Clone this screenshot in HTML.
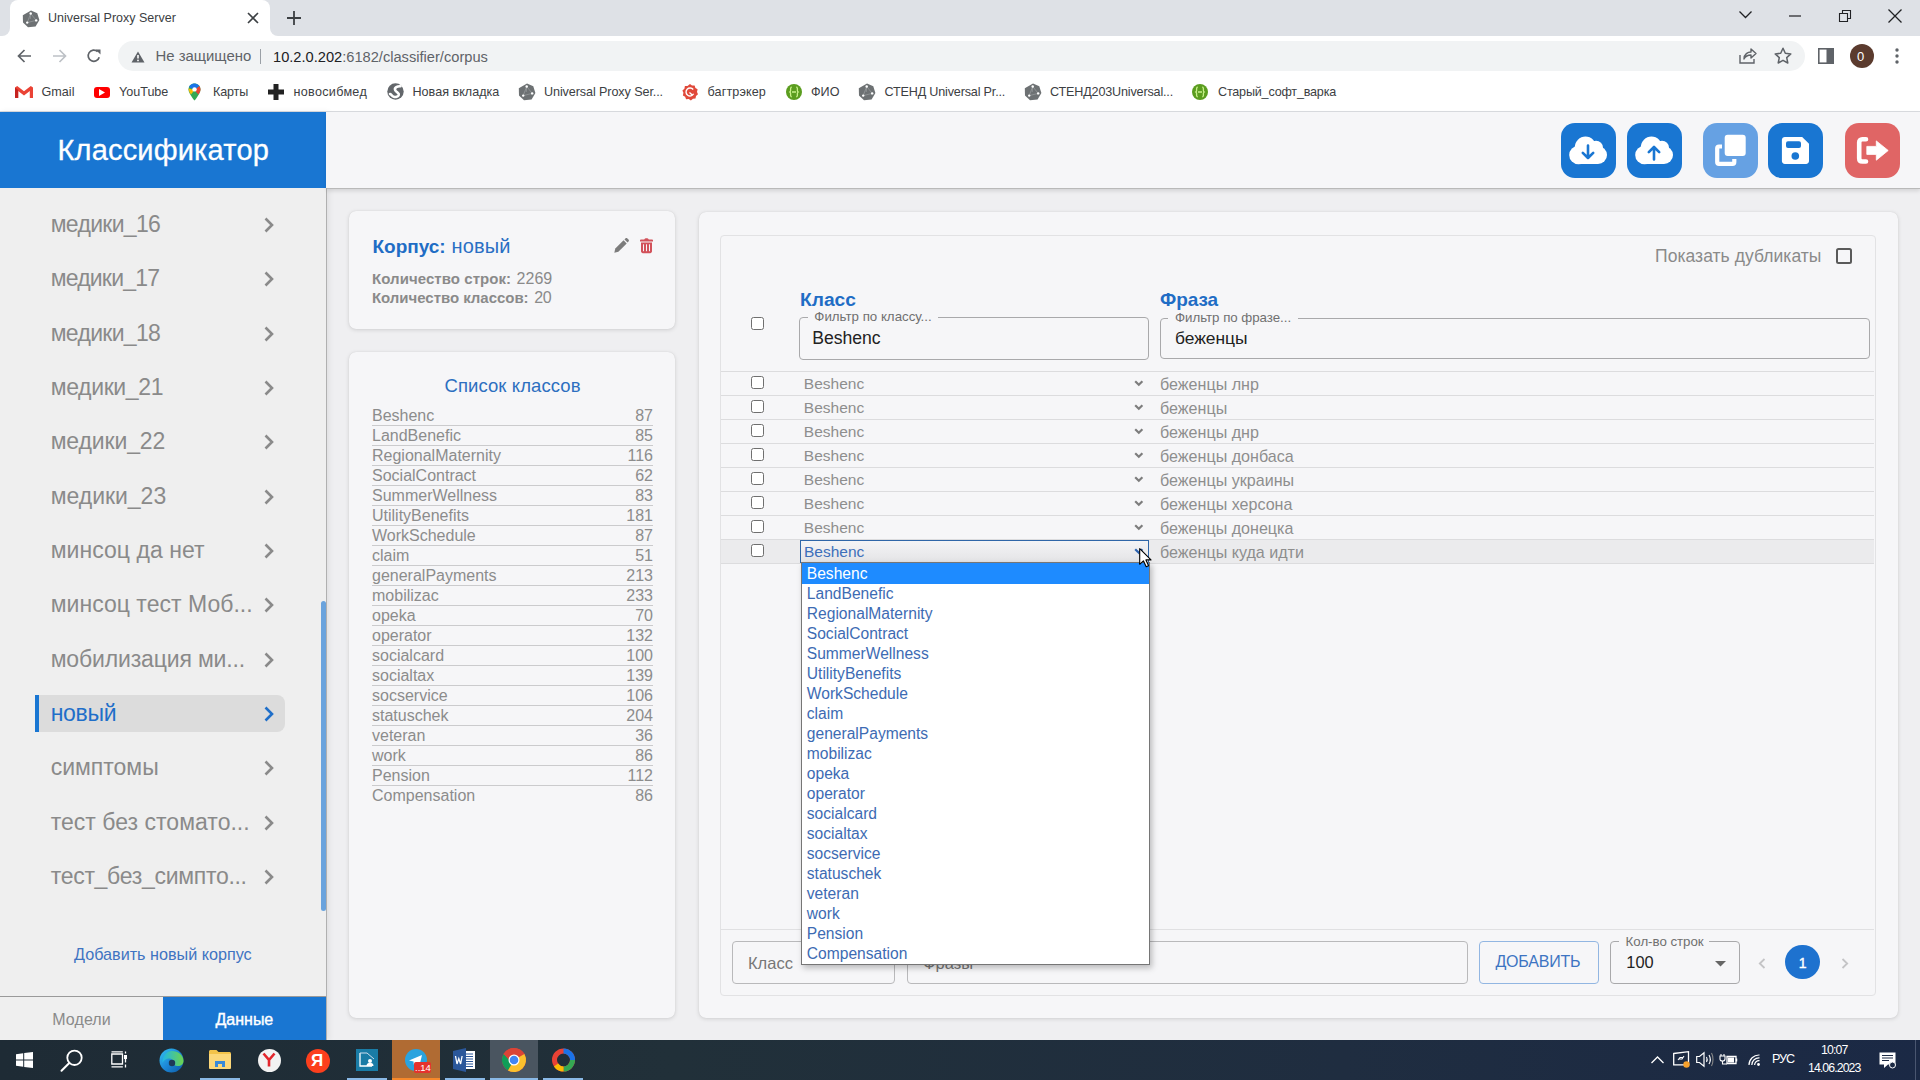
<!DOCTYPE html>
<html><head><meta charset="utf-8"><title>Universal Proxy Server</title>
<style>
*{box-sizing:border-box;margin:0;padding:0}
html,body{width:1920px;height:1080px;overflow:hidden;background:#efeff1;font-family:"Liberation Sans",sans-serif}
.a{position:absolute}
.t{position:absolute;white-space:nowrap;line-height:1}
svg{position:absolute;overflow:visible}
/* chrome */
#tabstrip{left:0;top:0;width:1920px;height:36px;background:#dee1e6}
#toolbar{left:0;top:36px;width:1920px;height:36px;background:#fff}
#bookmarks{left:0;top:72px;width:1920px;height:40px;background:#fff;border-bottom:1px solid #dadce0}
.bm{font-size:12.6px;color:#3c4043;top:85.5px}
/* page */
#sidebar{left:0;top:112px;width:327px;height:928px;background:#efefef;border-right:1px solid #b0b0b0;box-shadow:2px 0 6px rgba(0,0,0,.07)}
#brand{left:0;top:112px;width:326px;height:76px;background:#1976d2}
#topbar{left:327px;top:112px;width:1593px;height:77px;background:#f6f6f8;border-bottom:1px solid #b9b9b9;box-shadow:0 2px 4px rgba(0,0,0,.12)}
.card{position:absolute;background:#f6f6f8;border-radius:7px;box-shadow:0 1px 4px rgba(0,0,0,.13),0 0 1px rgba(0,0,0,.12)}
#taskbar{left:0;top:1040px;width:1920px;height:40px;background:#1f2a3a}
</style></head><body>

<!-- ===== Chrome tab strip ===== -->
<div id="tabstrip" class="a"></div>
<div class="a" style="left:10px;top:0;width:260px;height:36px;background:#fff;border-radius:8px 8px 0 0"></div>
<div class="a" style="left:2px;top:28px;width:8px;height:8px;background:#fff"></div>
<div class="a" style="left:-6px;top:20px;width:16px;height:16px;background:#dee1e6;border-radius:50%"></div>
<div class="a" style="left:270px;top:28px;width:8px;height:8px;background:#fff"></div>
<div class="a" style="left:270px;top:20px;width:16px;height:16px;background:#dee1e6;border-radius:50%"></div>
<svg style="left:22px;top:10px" width="18" height="18"><path d="M9 0.6L15.3 3.3L17.4 10L13.6 16.4L6 17.2L1 12.6L0.8 5.2Z" fill="#6d7173"/><path d="M8.7 3.5L5.2 12.6L14.2 10.4Z M8.7 3.5L8.2 9" stroke="#9a9d9f" stroke-width="0.7" fill="none"/><circle cx="8.7" cy="3.5" r="1.2" fill="#fff"/><circle cx="5.2" cy="12.6" r="1.2" fill="#fff"/><circle cx="14.2" cy="10.4" r="1.2" fill="#fff"/></svg>
<div class="t" style="left:48px;top:12.2px;font-size:12.5px;color:#3c4043">Universal Proxy Server</div>
<svg style="left:247px;top:12px" width="12" height="12"><path d="M1 1L11 11M11 1L1 11" stroke="#3c4043" stroke-width="1.6"/></svg>
<svg style="left:287px;top:11px" width="14" height="14"><path d="M7 0V14M0 7H14" stroke="#3c4043" stroke-width="1.8"/></svg>
<svg style="left:1739px;top:11px" width="13" height="8"><path d="M0.5 0.5L6.5 6.5L12.5 0.5" stroke="#202124" stroke-width="1.3" fill="none"/></svg>
<svg style="left:1789px;top:15px" width="12" height="2"><path d="M0 1H12" stroke="#202124" stroke-width="1.2"/></svg>
<svg style="left:1839px;top:10px" width="12" height="12"><path d="M0.5 3.5H8.5V11.5H0.5Z M3.5 3.5V0.5H11.5V8.5H8.5" stroke="#202124" stroke-width="1.1" fill="none"/></svg>
<svg style="left:1888px;top:9px" width="14" height="14"><path d="M0.5 0.5L13.5 13.5M13.5 0.5L0.5 13.5" stroke="#202124" stroke-width="1.3"/></svg>

<!-- ===== Toolbar ===== -->
<div id="toolbar" class="a"></div>
<svg style="left:17px;top:49px" width="15" height="14"><path d="M14 7H1.5M7.5 1L1.5 7L7.5 13" stroke="#5f6368" stroke-width="1.7" fill="none"/></svg>
<svg style="left:52px;top:49px" width="15" height="14"><path d="M1 7H13.5M7.5 1L13.5 7L7.5 13" stroke="#bdc1c6" stroke-width="1.7" fill="none"/></svg>
<svg style="left:86px;top:48px" width="16" height="16"><path d="M13.2 9.2A5.6 5.6 0 1 1 11.6 3.6" stroke="#5f6368" stroke-width="1.7" fill="none"/><path d="M9.5 1.5H14.5V6.5Z" fill="#5f6368"/></svg>
<div class="a" style="left:118px;top:41px;width:1687px;height:30px;background:#f1f3f4;border-radius:15px"></div>
<svg style="left:131px;top:51px" width="14" height="12"><path d="M7 0.5L13.5 11.5H0.5Z" fill="#5f6368"/><path d="M7 4V7.5" stroke="#fff" stroke-width="1.6"/><circle cx="7" cy="9.4" r="0.9" fill="#fff"/></svg>
<div class="t" style="left:155.5px;top:49.4px;font-size:14.9px;color:#5f6368">Не защищено</div>
<div class="a" style="left:260px;top:49px;width:1px;height:15px;background:#9aa0a6"></div>
<div class="t" style="left:273px;top:49.6px;font-size:14.65px;color:#5f6368"><span style="color:#202124">10.2.0.202</span>:6182/classifier/corpus</div>
<svg style="left:1739px;top:47px" width="18" height="18"><path d="M1 8V16H15V12" stroke="#5f6368" stroke-width="1.4" fill="none"/><path d="M5 12C5 7 9 5 12 5V2L17 6.5L12 11V8C9 8 6.5 9 5 12Z" stroke="#5f6368" stroke-width="1.4" fill="none" stroke-linejoin="round"/></svg>
<svg style="left:1774px;top:47px" width="18" height="18"><path d="M9 1.2L11.3 6.3L16.8 6.9L12.7 10.6L13.8 16L9 13.3L4.2 16L5.3 10.6L1.2 6.9L6.7 6.3Z" stroke="#5f6368" stroke-width="1.5" fill="none" stroke-linejoin="round"/></svg>
<svg style="left:1818px;top:48px" width="16" height="16"><rect x="0.8" y="0.8" width="14.4" height="14.4" stroke="#5f6368" stroke-width="1.6" fill="none"/><rect x="8.5" y="1" width="6.5" height="14" fill="#5f6368"/></svg>
<div class="a" style="left:1850px;top:44px;width:24px;height:24px;background:#5b3b2e;border-radius:50%"></div>
<div class="t" style="left:1857px;top:50px;font-size:13px;color:#fff">0</div>
<svg style="left:1895px;top:48px" width="4" height="16"><circle cx="2" cy="2" r="1.7" fill="#5f6368"/><circle cx="2" cy="8" r="1.7" fill="#5f6368"/><circle cx="2" cy="14" r="1.7" fill="#5f6368"/></svg>

<!-- ===== Bookmarks ===== -->
<div id="bookmarks" class="a"></div>
<svg style="left:15px;top:86px" width="18" height="12"><path d="M0 1.5V12H3.2V5L9 9.5L14.8 5V12H18V1.5L15.8 0L9 5.2L2.2 0Z" fill="#ea4335"/><path d="M0 1.5L3.2 4V12H1C0.4 12 0 11.6 0 11Z" fill="#c5221f"/></svg>
<div class="t bm" style="left:41.5px;letter-spacing:0.025px">Gmail</div>
<div class="a" style="left:93.5px;top:86.5px;width:16.5px;height:11.5px;background:#ff0000;border-radius:3px"></div>
<svg style="left:99px;top:89px" width="6" height="7"><path d="M0 0L6 3.5L0 7Z" fill="#fff"/></svg>
<div class="t bm" style="left:119px;letter-spacing:-0.024px">YouTube</div>
<svg style="left:188px;top:83px" width="13" height="18"><path d="M6.5 0.5C3.2 0.5 0.5 3.1 0.5 6.4C0.5 10.5 6.5 17.5 6.5 17.5C6.5 17.5 12.5 10.5 12.5 6.4C12.5 3.1 9.8 0.5 6.5 0.5Z" fill="#34a853"/><path d="M1 4C1.8 1.8 4 0.5 6.5 0.5C8.5 0.5 10.3 1.4 11.4 2.9L6.5 7Z" fill="#1a73e8"/><path d="M0.6 5.5L6.5 7L3 11.5C1.5 9.5 0.5 7.5 0.6 5.5Z" fill="#fbbc04"/><path d="M11.4 2.9C12.1 3.9 12.5 5.1 12.5 6.4C12.5 7.8 11.5 9.8 10.3 11.5L6.5 7Z" fill="#ea4335"/><circle cx="6.5" cy="6.4" r="2.2" fill="#fff"/></svg>
<div class="t bm" style="left:213px;letter-spacing:-0.175px">Карты</div>
<svg style="left:268px;top:83px" width="16" height="18"><path d="M8 1V17M0 9H16" stroke="#222" stroke-width="5"/></svg>
<div class="t bm" style="left:293.5px;letter-spacing:0.302px">новосибмед</div>
<svg style="left:387px;top:83px" width="17" height="17"><circle cx="8.5" cy="8.5" r="8.2" fill="#63676b"/><path d="M13.5 3.2C10.5 3 7 4.5 8.2 7.2C9.3 9.6 12.5 9.5 11.8 12C11.3 13.8 8.5 14.5 6.5 13.6C5 13 4.5 11.5 3 11" stroke="#fff" stroke-width="2.6" fill="none" stroke-linecap="round"/></svg>
<div class="t bm" style="left:412.5px;letter-spacing:0.001px">Новая вкладка</div>
<svg style="left:518px;top:83px" width="18" height="18"><path d="M9 0.6L15.3 3.3L17.4 10L13.6 16.4L6 17.2L1 12.6L0.8 5.2Z" fill="#6d7173"/><path d="M8.7 3.5L5.2 12.6L14.2 10.4Z M8.7 3.5L8.2 9" stroke="#9a9d9f" stroke-width="0.7" fill="none"/><circle cx="8.7" cy="3.5" r="1.2" fill="#fff"/><circle cx="5.2" cy="12.6" r="1.2" fill="#fff"/><circle cx="14.2" cy="10.4" r="1.2" fill="#fff"/></svg>
<div class="t bm" style="left:544px;letter-spacing:-0.094px">Universal Proxy Ser...</div>
<svg style="left:682px;top:83.5px" width="16" height="16"><path d="M8 0L10 1.6L12.6 1.4L13.4 3.9L15.6 5.3L15 7.9L16 10.3L14 12L13.5 14.6L10.9 14.8L8.9 16.4L6.7 15L4.1 15.2L3.1 12.8L0.9 11.4L1.4 8.8L0.4 6.4L2.4 4.7L2.9 2.1L5.5 1.9Z" fill="#e0493a"/><path d="M11.2 5.5A4 4 0 1 0 11.6 9.8" stroke="#fff" stroke-width="1.4" fill="none"/><path d="M7.5 8.5L10.5 11.2" stroke="#fff" stroke-width="1.4"/></svg>
<div class="t bm" style="left:707.5px;letter-spacing:0.125px">багтрэкер</div>
<svg style="left:786px;top:83.5px" width="16" height="16"><circle cx="8" cy="8" r="8" fill="#5b9d1f"/><path d="M5.8 3.2C4.3 3.2 4.6 5.2 4.6 6.5C4.6 7.5 3.8 8 3.8 8C3.8 8 4.6 8.5 4.6 9.5C4.6 10.8 4.3 12.8 5.8 12.8M10.2 3.2C11.7 3.2 11.4 5.2 11.4 6.5C11.4 7.5 12.2 8 12.2 8C12.2 8 11.4 8.5 11.4 9.5C11.4 10.8 11.7 12.8 10.2 12.8M6 8H10" stroke="#c8f08a" stroke-width="1.3" fill="none"/></svg>
<div class="t bm" style="left:811px;letter-spacing:0.026px">ФИО</div>
<svg style="left:858px;top:83px" width="18" height="18"><path d="M9 0.6L15.3 3.3L17.4 10L13.6 16.4L6 17.2L1 12.6L0.8 5.2Z" fill="#6d7173"/><path d="M8.7 3.5L5.2 12.6L14.2 10.4Z M8.7 3.5L8.2 9" stroke="#9a9d9f" stroke-width="0.7" fill="none"/><circle cx="8.7" cy="3.5" r="1.2" fill="#fff"/><circle cx="5.2" cy="12.6" r="1.2" fill="#fff"/><circle cx="14.2" cy="10.4" r="1.2" fill="#fff"/></svg>
<div class="t bm" style="left:884.5px;letter-spacing:-0.175px">СТЕНД Universal Pr...</div>
<svg style="left:1024px;top:83px" width="18" height="18"><path d="M9 0.6L15.3 3.3L17.4 10L13.6 16.4L6 17.2L1 12.6L0.8 5.2Z" fill="#6d7173"/><path d="M8.7 3.5L5.2 12.6L14.2 10.4Z M8.7 3.5L8.2 9" stroke="#9a9d9f" stroke-width="0.7" fill="none"/><circle cx="8.7" cy="3.5" r="1.2" fill="#fff"/><circle cx="5.2" cy="12.6" r="1.2" fill="#fff"/><circle cx="14.2" cy="10.4" r="1.2" fill="#fff"/></svg>
<div class="t bm" style="left:1050px;letter-spacing:-0.168px">СТЕНД203Universal...</div>
<svg style="left:1192px;top:83.5px" width="16" height="16"><circle cx="8" cy="8" r="8" fill="#5b9d1f"/><path d="M5.8 3.2C4.3 3.2 4.6 5.2 4.6 6.5C4.6 7.5 3.8 8 3.8 8C3.8 8 4.6 8.5 4.6 9.5C4.6 10.8 4.3 12.8 5.8 12.8M10.2 3.2C11.7 3.2 11.4 5.2 11.4 6.5C11.4 7.5 12.2 8 12.2 8C12.2 8 11.4 8.5 11.4 9.5C11.4 10.8 11.7 12.8 10.2 12.8M6 8H10" stroke="#c8f08a" stroke-width="1.3" fill="none"/></svg>
<div class="t bm" style="left:1218px;letter-spacing:-0.201px">Старый_софт_варка</div>


<!-- ===== Page ===== -->
<div id="sidebar" class="a"></div>
<div id="brand" class="a"></div>
<div class="t" style="left:57.5px;top:135.5px;font-size:29px;color:#fff;letter-spacing:0.175px;-webkit-text-stroke:0.3px #fff">Классификатор</div>
<div id="topbar" class="a"></div>
<div class="a" style="left:326px;top:112px;width:1px;height:76px;background:#f6f6f8"></div>
<div class="a" style="left:35px;top:695px;width:250px;height:37px;background:#dcdcdc;border-radius:0 8px 8px 0"></div>
<div class="a" style="left:35px;top:695px;width:4px;height:37px;background:#1976d2"></div>
<div class="t" style="left:50.7px;top:212.93px;font-size:23.00px;color:#8a8a8a;letter-spacing:-0.686px">медики_16</div>
<svg style="left:264px;top:216.9px" width="10" height="16"><path d="M1.5 1.5L8 8L1.5 14.5" stroke="#8a8a8a" stroke-width="2.6" fill="none"/></svg>
<div class="t" style="left:50.7px;top:267.26px;font-size:23.00px;color:#8a8a8a;letter-spacing:-0.797px">медики_17</div>
<svg style="left:264px;top:271.2px" width="10" height="16"><path d="M1.5 1.5L8 8L1.5 14.5" stroke="#8a8a8a" stroke-width="2.6" fill="none"/></svg>
<div class="t" style="left:50.7px;top:321.59px;font-size:23.00px;color:#8a8a8a;letter-spacing:-0.686px">медики_18</div>
<svg style="left:264px;top:325.6px" width="10" height="16"><path d="M1.5 1.5L8 8L1.5 14.5" stroke="#8a8a8a" stroke-width="2.6" fill="none"/></svg>
<div class="t" style="left:50.7px;top:375.92px;font-size:23.00px;color:#8a8a8a;letter-spacing:-0.352px">медики_21</div>
<svg style="left:264px;top:379.9px" width="10" height="16"><path d="M1.5 1.5L8 8L1.5 14.5" stroke="#8a8a8a" stroke-width="2.6" fill="none"/></svg>
<div class="t" style="left:50.7px;top:430.25px;font-size:23.00px;color:#8a8a8a;letter-spacing:-0.130px">медики_22</div>
<svg style="left:264px;top:434.2px" width="10" height="16"><path d="M1.5 1.5L8 8L1.5 14.5" stroke="#8a8a8a" stroke-width="2.6" fill="none"/></svg>
<div class="t" style="left:50.7px;top:484.58px;font-size:23.00px;color:#8a8a8a;letter-spacing:-0.019px">медики_23</div>
<svg style="left:264px;top:488.5px" width="10" height="16"><path d="M1.5 1.5L8 8L1.5 14.5" stroke="#8a8a8a" stroke-width="2.6" fill="none"/></svg>
<div class="t" style="left:50.7px;top:538.91px;font-size:23.00px;color:#8a8a8a;letter-spacing:0.049px">минсоц да нет</div>
<svg style="left:264px;top:542.9px" width="10" height="16"><path d="M1.5 1.5L8 8L1.5 14.5" stroke="#8a8a8a" stroke-width="2.6" fill="none"/></svg>
<div class="t" style="left:50.7px;top:593.24px;font-size:23.00px;color:#8a8a8a;letter-spacing:0.026px">минсоц тест Моб...</div>
<svg style="left:264px;top:597.2px" width="10" height="16"><path d="M1.5 1.5L8 8L1.5 14.5" stroke="#8a8a8a" stroke-width="2.6" fill="none"/></svg>
<div class="t" style="left:50.7px;top:647.57px;font-size:23.00px;color:#8a8a8a;letter-spacing:-0.154px">мобилизация ми...</div>
<svg style="left:264px;top:651.5px" width="10" height="16"><path d="M1.5 1.5L8 8L1.5 14.5" stroke="#8a8a8a" stroke-width="2.6" fill="none"/></svg>
<div class="t" style="left:50.7px;top:701.90px;font-size:23.00px;color:#1f6fc9;letter-spacing:-0.319px">новый</div>
<svg style="left:264px;top:705.9px" width="10" height="16"><path d="M1.5 1.5L8 8L1.5 14.5" stroke="#1f6fc9" stroke-width="2.6" fill="none"/></svg>
<div class="t" style="left:50.7px;top:756.23px;font-size:23.00px;color:#8a8a8a;letter-spacing:-0.002px">симптомы</div>
<svg style="left:264px;top:760.2px" width="10" height="16"><path d="M1.5 1.5L8 8L1.5 14.5" stroke="#8a8a8a" stroke-width="2.6" fill="none"/></svg>
<div class="t" style="left:50.7px;top:810.56px;font-size:23.00px;color:#8a8a8a;letter-spacing:0.025px">тест без стомато...</div>
<svg style="left:264px;top:814.5px" width="10" height="16"><path d="M1.5 1.5L8 8L1.5 14.5" stroke="#8a8a8a" stroke-width="2.6" fill="none"/></svg>
<div class="t" style="left:50.7px;top:864.89px;font-size:23.00px;color:#8a8a8a;letter-spacing:-0.293px">тест_без_симпто...</div>
<svg style="left:264px;top:868.9px" width="10" height="16"><path d="M1.5 1.5L8 8L1.5 14.5" stroke="#8a8a8a" stroke-width="2.6" fill="none"/></svg>
<div class="a" style="left:321px;top:601px;width:5px;height:310px;background:#6aa3dd;border-radius:3px"></div>
<div class="t" style="left:74.0px;top:946.29px;font-size:16.20px;color:#3f74c2;letter-spacing:-0.004px">Добавить новый корпус</div>
<div class="a" style="left:0;top:996px;width:326px;height:1px;background:#9a9a9a"></div>
<div class="a" style="left:163px;top:997px;width:163px;height:43px;background:#1976d2"></div>
<div class="t" style="left:52.3px;top:1012.06px;font-size:16.00px;color:#8a8a8a;letter-spacing:0.070px">Модели</div>
<div class="t" style="left:215.5px;top:1012.06px;font-size:16.00px;color:#fff;letter-spacing:-0.007px;-webkit-text-stroke:0.4px #fff">Данные</div>
<div class="card" style="left:349px;top:211px;width:326px;height:118px"></div>
<div class="t" style="left:372.5px;top:236.92px;font-size:19.00px;color:#1f6dc5;font-weight:bold;letter-spacing:-0.038px">Корпус:</div>
<div class="t" style="left:451.6px;top:236.07px;font-size:20.00px;color:#2a6fc4;letter-spacing:0.131px">новый</div>
<svg style="left:614px;top:238px" width="16" height="15"><path d="M0.3 14.7L1.3 10.6L9.6 2.3L12.7 5.4L4.4 13.7Z" fill="#7c7c7c"/><path d="M10.5 1.4L11.4 0.5C12 -0.1 12.8 -0.1 13.4 0.5L14.5 1.6C15.1 2.2 15.1 3 14.5 3.6L13.6 4.5Z" fill="#7c7c7c"/></svg>
<svg style="left:640px;top:237.5px" width="13" height="16"><path d="M0 2.2C0 1.7 0.4 1.5 0.9 1.5H4.2C4.6 0.6 5.4 0.3 6.5 0.3C7.6 0.3 8.4 0.6 8.8 1.5H12.1C12.6 1.5 13 1.7 13 2.2V3.4H0Z" fill="#d2525b"/><path d="M1 4.4H12V13.3C12 14.4 11.2 15.2 10.1 15.2H2.9C1.8 15.2 1 14.4 1 13.3Z" fill="#d2525b"/><path d="M3.5 6.3V13.2M6.5 6.3V13.2M9.5 6.3V13.2" stroke="#f6f6f8" stroke-width="1"/></svg>
<div class="t" style="left:372.0px;top:270.80px;font-size:15.00px;color:#8a8a8a;font-weight:bold;letter-spacing:0.061px">Количество строк:</div>
<div class="t" style="left:516.4px;top:270.96px;font-size:16.00px;color:#8a8a8a;letter-spacing:0.094px">2269</div>
<div class="t" style="left:372.0px;top:289.80px;font-size:15.00px;color:#8a8a8a;font-weight:bold;letter-spacing:-0.036px">Количество классов:</div>
<div class="t" style="left:534.2px;top:289.96px;font-size:16.00px;color:#8a8a8a;letter-spacing:-0.406px">20</div>
<div class="card" style="left:349px;top:352px;width:326px;height:666px"></div>
<div class="t" style="left:444.5px;top:376.54px;font-size:18.50px;color:#2d6fc0;letter-spacing:0.081px">Список классов</div>
<div class="t" style="left:372.0px;top:407.66px;font-size:16.00px;color:#8c8c8c">Beshenc</div>
<div class="t" style="right:1267px;top:407.66px;font-size:16px;color:#8c8c8c">87</div>
<div class="a" style="left:372px;top:425.0px;width:280.5px;height:1px;background:#cbcbcd"></div>
<div class="t" style="left:372.0px;top:427.66px;font-size:16.00px;color:#8c8c8c">LandBenefic</div>
<div class="t" style="right:1267px;top:427.66px;font-size:16px;color:#8c8c8c">85</div>
<div class="a" style="left:372px;top:445.0px;width:280.5px;height:1px;background:#cbcbcd"></div>
<div class="t" style="left:372.0px;top:447.66px;font-size:16.00px;color:#8c8c8c">RegionalMaternity</div>
<div class="t" style="right:1267px;top:447.66px;font-size:16px;color:#8c8c8c">116</div>
<div class="a" style="left:372px;top:465.0px;width:280.5px;height:1px;background:#cbcbcd"></div>
<div class="t" style="left:372.0px;top:467.66px;font-size:16.00px;color:#8c8c8c">SocialContract</div>
<div class="t" style="right:1267px;top:467.66px;font-size:16px;color:#8c8c8c">62</div>
<div class="a" style="left:372px;top:485.0px;width:280.5px;height:1px;background:#cbcbcd"></div>
<div class="t" style="left:372.0px;top:487.66px;font-size:16.00px;color:#8c8c8c">SummerWellness</div>
<div class="t" style="right:1267px;top:487.66px;font-size:16px;color:#8c8c8c">83</div>
<div class="a" style="left:372px;top:505.0px;width:280.5px;height:1px;background:#cbcbcd"></div>
<div class="t" style="left:372.0px;top:507.66px;font-size:16.00px;color:#8c8c8c">UtilityBenefits</div>
<div class="t" style="right:1267px;top:507.66px;font-size:16px;color:#8c8c8c">181</div>
<div class="a" style="left:372px;top:525.0px;width:280.5px;height:1px;background:#cbcbcd"></div>
<div class="t" style="left:372.0px;top:527.66px;font-size:16.00px;color:#8c8c8c">WorkSchedule</div>
<div class="t" style="right:1267px;top:527.66px;font-size:16px;color:#8c8c8c">87</div>
<div class="a" style="left:372px;top:545.0px;width:280.5px;height:1px;background:#cbcbcd"></div>
<div class="t" style="left:372.0px;top:547.66px;font-size:16.00px;color:#8c8c8c">claim</div>
<div class="t" style="right:1267px;top:547.66px;font-size:16px;color:#8c8c8c">51</div>
<div class="a" style="left:372px;top:565.0px;width:280.5px;height:1px;background:#cbcbcd"></div>
<div class="t" style="left:372.0px;top:567.66px;font-size:16.00px;color:#8c8c8c">generalPayments</div>
<div class="t" style="right:1267px;top:567.66px;font-size:16px;color:#8c8c8c">213</div>
<div class="a" style="left:372px;top:585.0px;width:280.5px;height:1px;background:#cbcbcd"></div>
<div class="t" style="left:372.0px;top:587.66px;font-size:16.00px;color:#8c8c8c">mobilizac</div>
<div class="t" style="right:1267px;top:587.66px;font-size:16px;color:#8c8c8c">233</div>
<div class="a" style="left:372px;top:605.0px;width:280.5px;height:1px;background:#cbcbcd"></div>
<div class="t" style="left:372.0px;top:607.66px;font-size:16.00px;color:#8c8c8c">opeka</div>
<div class="t" style="right:1267px;top:607.66px;font-size:16px;color:#8c8c8c">70</div>
<div class="a" style="left:372px;top:625.0px;width:280.5px;height:1px;background:#cbcbcd"></div>
<div class="t" style="left:372.0px;top:627.66px;font-size:16.00px;color:#8c8c8c">operator</div>
<div class="t" style="right:1267px;top:627.66px;font-size:16px;color:#8c8c8c">132</div>
<div class="a" style="left:372px;top:645.0px;width:280.5px;height:1px;background:#cbcbcd"></div>
<div class="t" style="left:372.0px;top:647.66px;font-size:16.00px;color:#8c8c8c">socialcard</div>
<div class="t" style="right:1267px;top:647.66px;font-size:16px;color:#8c8c8c">100</div>
<div class="a" style="left:372px;top:665.0px;width:280.5px;height:1px;background:#cbcbcd"></div>
<div class="t" style="left:372.0px;top:667.66px;font-size:16.00px;color:#8c8c8c">socialtax</div>
<div class="t" style="right:1267px;top:667.66px;font-size:16px;color:#8c8c8c">139</div>
<div class="a" style="left:372px;top:685.0px;width:280.5px;height:1px;background:#cbcbcd"></div>
<div class="t" style="left:372.0px;top:687.66px;font-size:16.00px;color:#8c8c8c">socservice</div>
<div class="t" style="right:1267px;top:687.66px;font-size:16px;color:#8c8c8c">106</div>
<div class="a" style="left:372px;top:705.0px;width:280.5px;height:1px;background:#cbcbcd"></div>
<div class="t" style="left:372.0px;top:707.66px;font-size:16.00px;color:#8c8c8c">statuschek</div>
<div class="t" style="right:1267px;top:707.66px;font-size:16px;color:#8c8c8c">204</div>
<div class="a" style="left:372px;top:725.0px;width:280.5px;height:1px;background:#cbcbcd"></div>
<div class="t" style="left:372.0px;top:727.66px;font-size:16.00px;color:#8c8c8c">veteran</div>
<div class="t" style="right:1267px;top:727.66px;font-size:16px;color:#8c8c8c">36</div>
<div class="a" style="left:372px;top:745.0px;width:280.5px;height:1px;background:#cbcbcd"></div>
<div class="t" style="left:372.0px;top:747.66px;font-size:16.00px;color:#8c8c8c">work</div>
<div class="t" style="right:1267px;top:747.66px;font-size:16px;color:#8c8c8c">86</div>
<div class="a" style="left:372px;top:765.0px;width:280.5px;height:1px;background:#cbcbcd"></div>
<div class="t" style="left:372.0px;top:767.66px;font-size:16.00px;color:#8c8c8c">Pension</div>
<div class="t" style="right:1267px;top:767.66px;font-size:16px;color:#8c8c8c">112</div>
<div class="a" style="left:372px;top:785.0px;width:280.5px;height:1px;background:#cbcbcd"></div>
<div class="t" style="left:372.0px;top:787.66px;font-size:16.00px;color:#8c8c8c">Compensation</div>
<div class="t" style="right:1267px;top:787.66px;font-size:16px;color:#8c8c8c">86</div>
<div class="a" style="left:1561px;top:123px;width:55px;height:55px;border-radius:14px;background:#1976d2"></div><svg style="left:1561px;top:123px" width="55" height="55"><circle cx="17.5" cy="32" r="9.3" fill="#fff"/><circle cx="24.5" cy="24.3" r="10.7" fill="#fff"/><circle cx="35" cy="24.8" r="7" fill="#fff"/><circle cx="37" cy="32" r="9" fill="#fff"/><rect x="17.5" y="28" width="19.5" height="13" fill="#fff"/><path d="M27 22.5V35M21.8 29.8L27 35L32.2 29.8" stroke="#1976d2" stroke-width="2.6" fill="none" stroke-linecap="round" stroke-linejoin="round"/></svg>
<div class="a" style="left:1627px;top:123px;width:55px;height:55px;border-radius:14px;background:#1976d2"></div><svg style="left:1627px;top:123px" width="55" height="55"><circle cx="17.5" cy="32" r="9.3" fill="#fff"/><circle cx="24.5" cy="24.3" r="10.7" fill="#fff"/><circle cx="35" cy="24.8" r="7" fill="#fff"/><circle cx="37" cy="32" r="9" fill="#fff"/><rect x="17.5" y="28" width="19.5" height="13" fill="#fff"/><path d="M27 36.5V24M21.8 29.2L27 24L32.2 29.2" stroke="#1976d2" stroke-width="2.6" fill="none" stroke-linecap="round" stroke-linejoin="round"/></svg>
<div class="a" style="left:1703px;top:123px;width:55px;height:55px;border-radius:14px;background:#66a1e3"></div><svg style="left:1703px;top:123px" width="55" height="55"><rect x="21.7" y="11.8" width="21" height="21.2" rx="3" fill="#fff"/><path d="M19 23.5H16C15 23.5 14.2 24.3 14.2 25.3V39C14.2 40 15 40.8 16 40.8H29.5C30.5 40.8 31.3 40 31.3 39V36" stroke="#fff" stroke-width="4.2" fill="none"/></svg>
<div class="a" style="left:1768px;top:123px;width:55px;height:55px;border-radius:14px;background:#1976d2"></div><svg style="left:1768px;top:123px" width="55" height="55"><path d="M16.8 13.9H34.2L41 20.7V38C41 39.6 39.7 40.9 38.1 40.9H16.8C15.2 40.9 13.9 39.6 13.9 38V16.8C13.9 15.2 15.2 13.9 16.8 13.9Z" fill="#fff"/><rect x="18" y="18.2" width="15" height="6.7" rx="2" fill="#1976d2"/><circle cx="27.3" cy="33" r="3.8" fill="#1976d2"/></svg>
<div class="a" style="left:1845px;top:123px;width:55px;height:55px;border-radius:14px;background:#e06565"></div><svg style="left:1845px;top:123px" width="55" height="55"><path d="M21 16.3H17.3C15.4 16.3 14.2 17.6 14.2 19.5V35.3C14.2 37.2 15.4 38.5 17.3 38.5H21" stroke="#fff" stroke-width="4.6" fill="none" stroke-linecap="round"/><path d="M21.8 23.4H31.3V17.9L43.2 27.5L31.3 37.2V31.4H21.8Z" fill="#fff" stroke="#fff" stroke-width="0.8" stroke-linejoin="round"/></svg>
<div class="card" style="left:699px;top:212px;width:1199px;height:806px"></div>
<div class="a" style="left:720px;top:235px;width:1156px;height:761px;border:1px solid #e2e2e4;border-radius:4px"></div>
<div class="t" style="left:1655.0px;top:248.49px;font-size:17.50px;color:#8a8a8a;letter-spacing:0.047px">Показать дубликаты</div>
<div class="a" style="left:1836.0px;top:248.0px;width:16px;height:16px;border:2.0px solid #5a5a5a;border-radius:2.5px;background:transparent"></div>
<div class="a" style="left:751.0px;top:317.0px;width:13px;height:13px;border:1.5px solid #6f6f6f;border-radius:2.5px;background:#fff"></div>
<div class="t" style="left:800.0px;top:289.75px;font-size:19.20px;color:#1f6dc5;font-weight:bold;letter-spacing:0.016px">Класс</div>
<div class="t" style="left:1160.0px;top:289.92px;font-size:19.00px;color:#1f6dc5;font-weight:bold;letter-spacing:-0.075px">Фраза</div>
<div class="a" style="left:799.0px;top:317.0px;width:350.0px;height:42.5px;border:1px solid #a9a9ab;border-radius:4px"></div><div class="a" style="left:808.0px;top:316.0px;width:130.0px;height:3px;background:#f6f6f8"></div><div class="t" style="left:814.3px;top:310.34px;font-size:13.30px;color:#707070;letter-spacing:-0.004px">Фильтр по классу...</div>
<div class="t" style="left:812.2px;top:330.30px;font-size:17.60px;color:#222">Beshenc</div>
<div class="a" style="left:1160.0px;top:317.5px;width:710.0px;height:41.7px;border:1px solid #a9a9ab;border-radius:4px"></div><div class="a" style="left:1168.0px;top:316.5px;width:130.4px;height:3px;background:#f6f6f8"></div><div class="t" style="left:1175.0px;top:310.84px;font-size:13.30px;color:#707070;letter-spacing:-0.033px">Фильтр по фразе...</div>
<div class="t" style="left:1175.0px;top:329.77px;font-size:17.40px;color:#222;letter-spacing:-0.018px">беженцы</div>
<div class="a" style="left:721px;top:371px;width:1153px;height:1px;background:#dcdcde"></div>
<div class="a" style="left:721px;top:395px;width:1153px;height:1px;background:#dcdcde"></div>
<div class="a" style="left:751.0px;top:375.5px;width:13px;height:13px;border:1.5px solid #6f6f6f;border-radius:2.5px;background:#fff"></div>
<div class="t" style="left:803.8px;top:375.88px;font-size:15.50px;color:#8e8e8e;letter-spacing:0.008px">Beshenc</div>
<svg style="left:1134px;top:380.0px" width="10" height="7"><path d="M1.2 1.2L4.8 4.8L8.4 1.2" stroke="#7d7d7d" stroke-width="2.2" fill="none"/></svg>
<div class="t" style="left:1160.0px;top:376.37px;font-size:16.10px;color:#8e8e8e">беженцы лнр</div>
<div class="a" style="left:721px;top:419px;width:1153px;height:1px;background:#dcdcde"></div>
<div class="a" style="left:751.0px;top:399.5px;width:13px;height:13px;border:1.5px solid #6f6f6f;border-radius:2.5px;background:#fff"></div>
<div class="t" style="left:803.8px;top:399.88px;font-size:15.50px;color:#8e8e8e;letter-spacing:0.008px">Beshenc</div>
<svg style="left:1134px;top:404.0px" width="10" height="7"><path d="M1.2 1.2L4.8 4.8L8.4 1.2" stroke="#7d7d7d" stroke-width="2.2" fill="none"/></svg>
<div class="t" style="left:1160.0px;top:400.37px;font-size:16.10px;color:#8e8e8e">беженцы</div>
<div class="a" style="left:721px;top:443px;width:1153px;height:1px;background:#dcdcde"></div>
<div class="a" style="left:751.0px;top:423.5px;width:13px;height:13px;border:1.5px solid #6f6f6f;border-radius:2.5px;background:#fff"></div>
<div class="t" style="left:803.8px;top:423.88px;font-size:15.50px;color:#8e8e8e;letter-spacing:0.008px">Beshenc</div>
<svg style="left:1134px;top:428.0px" width="10" height="7"><path d="M1.2 1.2L4.8 4.8L8.4 1.2" stroke="#7d7d7d" stroke-width="2.2" fill="none"/></svg>
<div class="t" style="left:1160.0px;top:424.37px;font-size:16.10px;color:#8e8e8e">беженцы днр</div>
<div class="a" style="left:721px;top:467px;width:1153px;height:1px;background:#dcdcde"></div>
<div class="a" style="left:751.0px;top:447.5px;width:13px;height:13px;border:1.5px solid #6f6f6f;border-radius:2.5px;background:#fff"></div>
<div class="t" style="left:803.8px;top:447.88px;font-size:15.50px;color:#8e8e8e;letter-spacing:0.008px">Beshenc</div>
<svg style="left:1134px;top:452.0px" width="10" height="7"><path d="M1.2 1.2L4.8 4.8L8.4 1.2" stroke="#7d7d7d" stroke-width="2.2" fill="none"/></svg>
<div class="t" style="left:1160.0px;top:448.37px;font-size:16.10px;color:#8e8e8e">беженцы донбаса</div>
<div class="a" style="left:721px;top:491px;width:1153px;height:1px;background:#dcdcde"></div>
<div class="a" style="left:751.0px;top:471.5px;width:13px;height:13px;border:1.5px solid #6f6f6f;border-radius:2.5px;background:#fff"></div>
<div class="t" style="left:803.8px;top:471.88px;font-size:15.50px;color:#8e8e8e;letter-spacing:0.008px">Beshenc</div>
<svg style="left:1134px;top:476.0px" width="10" height="7"><path d="M1.2 1.2L4.8 4.8L8.4 1.2" stroke="#7d7d7d" stroke-width="2.2" fill="none"/></svg>
<div class="t" style="left:1160.0px;top:472.37px;font-size:16.10px;color:#8e8e8e">беженцы украины</div>
<div class="a" style="left:721px;top:515px;width:1153px;height:1px;background:#dcdcde"></div>
<div class="a" style="left:751.0px;top:495.5px;width:13px;height:13px;border:1.5px solid #6f6f6f;border-radius:2.5px;background:#fff"></div>
<div class="t" style="left:803.8px;top:495.88px;font-size:15.50px;color:#8e8e8e;letter-spacing:0.008px">Beshenc</div>
<svg style="left:1134px;top:500.0px" width="10" height="7"><path d="M1.2 1.2L4.8 4.8L8.4 1.2" stroke="#7d7d7d" stroke-width="2.2" fill="none"/></svg>
<div class="t" style="left:1160.0px;top:496.37px;font-size:16.10px;color:#8e8e8e">беженцы херсона</div>
<div class="a" style="left:721px;top:539px;width:1153px;height:1px;background:#dcdcde"></div>
<div class="a" style="left:751.0px;top:519.5px;width:13px;height:13px;border:1.5px solid #6f6f6f;border-radius:2.5px;background:#fff"></div>
<div class="t" style="left:803.8px;top:519.88px;font-size:15.50px;color:#8e8e8e;letter-spacing:0.008px">Beshenc</div>
<svg style="left:1134px;top:524.0px" width="10" height="7"><path d="M1.2 1.2L4.8 4.8L8.4 1.2" stroke="#7d7d7d" stroke-width="2.2" fill="none"/></svg>
<div class="t" style="left:1160.0px;top:520.37px;font-size:16.10px;color:#8e8e8e">беженцы донецка</div>
<div class="a" style="left:721px;top:540px;width:1153px;height:24px;background:#ebebed"></div>
<div class="a" style="left:721px;top:563px;width:1153px;height:1px;background:#dcdcde"></div>
<div class="a" style="left:751.0px;top:543.5px;width:13px;height:13px;border:1.5px solid #6f6f6f;border-radius:2.5px;background:#fff"></div>
<div class="a" style="left:799.5px;top:540px;width:349.5px;height:23px;border:1px solid #2f66a8;background:linear-gradient(#f4f4f6,#e4e4e6)"></div>
<div class="t" style="left:804.0px;top:543.88px;font-size:15.50px;color:#3d6fba;letter-spacing:0.008px">Beshenc</div>
<svg style="left:1134px;top:548.0px" width="10" height="7"><path d="M1.2 1.2L4.8 4.8L8.4 1.2" stroke="#2d63b0" stroke-width="2.2" fill="none"/></svg>
<div class="t" style="left:1160.0px;top:544.37px;font-size:16.10px;color:#8e8e8e">беженцы куда идти</div>
<div class="a" style="left:721px;top:929px;width:1153px;height:1px;background:#e0e0e2"></div>
<div class="a" style="left:732.3px;top:941.2px;width:163.2px;height:43.2px;border:1px solid #b9b9bb;border-radius:4px"></div>
<div class="t" style="left:748.0px;top:955.13px;font-size:16.50px;color:#777">Класс</div>
<div class="a" style="left:907.3px;top:941.2px;width:560.4px;height:43.2px;border:1px solid #b9b9bb;border-radius:4px"></div>
<div class="t" style="left:923.0px;top:955.13px;font-size:16.50px;color:#777">Фразы</div>
<div class="a" style="left:1478.6px;top:941.4px;width:120px;height:43.1px;border:1px solid #92b6e2;border-radius:4px"></div>
<div class="t" style="left:1495.4px;top:953.66px;font-size:16.00px;color:#3d74c2;letter-spacing:-0.197px">ДОБАВИТЬ</div>
<div class="a" style="left:1610.3px;top:941.4px;width:129.3px;height:43.1px;border:1px solid #a9a9ab;border-radius:4px"></div><div class="a" style="left:1618.6px;top:940.4px;width:90.8px;height:3px;background:#f6f6f8"></div><div class="t" style="left:1625.6px;top:934.74px;font-size:13.30px;color:#707070;letter-spacing:-0.030px">Кол-во строк</div>
<div class="t" style="left:1626.3px;top:953.82px;font-size:16.40px;color:#222;letter-spacing:-0.009px">100</div>
<svg style="left:1714.5px;top:960.5px" width="11" height="6"><path d="M0 0H11L5.5 5.5Z" fill="#666"/></svg>
<svg style="left:1757.5px;top:957.8px" width="8" height="11"><path d="M6.5 1L1.8 5.5L6.5 10" stroke="#c4c4c6" stroke-width="1.8" fill="none"/></svg>
<div class="a" style="left:1785.3px;top:944.9px;width:34.6px;height:34.6px;border-radius:50%;background:#1e72cf"></div>
<div class="t" style="left:1798.8px;top:955.95px;font-size:14.00px;color:#fff;-webkit-text-stroke:0.4px #fff">1</div>
<svg style="left:1840.5px;top:957.8px" width="8" height="11"><path d="M1.5 1L6.2 5.5L1.5 10" stroke="#c4c4c6" stroke-width="1.8" fill="none"/></svg>
<div class="a" style="left:800.5px;top:562px;width:349px;height:402.5px;background:#fff;border:1px solid #767676;box-shadow:2px 3px 6px rgba(0,0,0,.25)"></div>
<div class="a" style="left:801.5px;top:563px;width:347px;height:20.5px;background:#1e8bff"></div>
<div class="t" style="left:806.8px;top:565.59px;font-size:15.60px;color:#fff">Beshenc</div>
<div class="t" style="left:806.8px;top:585.59px;font-size:15.60px;color:#3d6bb3">LandBenefic</div>
<div class="t" style="left:806.8px;top:605.59px;font-size:15.60px;color:#3d6bb3">RegionalMaternity</div>
<div class="t" style="left:806.8px;top:625.59px;font-size:15.60px;color:#3d6bb3">SocialContract</div>
<div class="t" style="left:806.8px;top:645.59px;font-size:15.60px;color:#3d6bb3">SummerWellness</div>
<div class="t" style="left:806.8px;top:665.59px;font-size:15.60px;color:#3d6bb3">UtilityBenefits</div>
<div class="t" style="left:806.8px;top:685.59px;font-size:15.60px;color:#3d6bb3">WorkSchedule</div>
<div class="t" style="left:806.8px;top:705.59px;font-size:15.60px;color:#3d6bb3">claim</div>
<div class="t" style="left:806.8px;top:725.59px;font-size:15.60px;color:#3d6bb3">generalPayments</div>
<div class="t" style="left:806.8px;top:745.59px;font-size:15.60px;color:#3d6bb3">mobilizac</div>
<div class="t" style="left:806.8px;top:765.59px;font-size:15.60px;color:#3d6bb3">opeka</div>
<div class="t" style="left:806.8px;top:785.59px;font-size:15.60px;color:#3d6bb3">operator</div>
<div class="t" style="left:806.8px;top:805.59px;font-size:15.60px;color:#3d6bb3">socialcard</div>
<div class="t" style="left:806.8px;top:825.59px;font-size:15.60px;color:#3d6bb3">socialtax</div>
<div class="t" style="left:806.8px;top:845.59px;font-size:15.60px;color:#3d6bb3">socservice</div>
<div class="t" style="left:806.8px;top:865.59px;font-size:15.60px;color:#3d6bb3">statuschek</div>
<div class="t" style="left:806.8px;top:885.59px;font-size:15.60px;color:#3d6bb3">veteran</div>
<div class="t" style="left:806.8px;top:905.59px;font-size:15.60px;color:#3d6bb3">work</div>
<div class="t" style="left:806.8px;top:925.59px;font-size:15.60px;color:#3d6bb3">Pension</div>
<div class="t" style="left:806.8px;top:945.59px;font-size:15.60px;color:#3d6bb3">Compensation</div>
<svg style="left:1138.5px;top:547.5px" width="14" height="21"><path d="M0.7 0.7V16.3L4.4 12.8L7.2 18.8L9.6 17.8L6.9 11.9H12Z" fill="#fff" stroke="#000" stroke-width="1.1" stroke-linejoin="round"/></svg>
<div class="a" style="left:0;top:1040px;width:1920px;height:40px;background:linear-gradient(90deg,#1e2b35 0%,#213039 35%,#1f2d40 70%,#1b2945 100%)"></div>
<svg style="left:16px;top:1052px" width="17" height="16"><path d="M0 2.2L7.2 1.2V7.5H0Z M8.2 1.05L17 0V7.5H8.2Z M0 8.5H7.2V14.8L0 13.8Z M8.2 8.5H17V16L8.2 14.95Z" fill="#fff"/></svg>
<svg style="left:60px;top:1049px" width="24" height="23"><circle cx="14.5" cy="8.8" r="7.2" stroke="#fff" stroke-width="1.8" fill="none"/><path d="M9.3 14L1.5 21.8" stroke="#fff" stroke-width="2" stroke-linecap="round"/></svg>
<svg style="left:111px;top:1051px" width="18" height="17"><path d="M0.8 3H11.5V13H0.8Z" stroke="#fff" stroke-width="1.3" fill="none"/><path d="M0.5 0.8H11.8M0.5 15.8H11.8M14.5 0.5V2.5M14.5 4.5V11.5M14.5 13.5V16.5" stroke="#fff" stroke-width="1.3"/><rect x="13" y="4" width="3" height="4" fill="#fff"/></svg>
<svg style="left:159px;top:1048px" width="25" height="25"><defs><linearGradient id="eg" x1="0" y1="0" x2="1" y2="1"><stop offset="0" stop-color="#35c1f1"/><stop offset="0.5" stop-color="#1c88d8"/><stop offset="1" stop-color="#0c59a4"/></linearGradient><linearGradient id="eg2" x1="0" y1="0" x2="1" y2="0"><stop offset="0" stop-color="#1fb5e8"/><stop offset="1" stop-color="#6dd34c"/></linearGradient></defs><circle cx="12.5" cy="12.5" r="12" fill="url(#eg)"/><path d="M13 3C19 3 24.5 7 24.5 13C24.5 16 22 18 19 18C16 18 14 16.5 14.5 14.5C15 12 12 10 9 10.5C6 11 4 13.5 3.5 15C3 9 7 3 13 3Z" fill="url(#eg2)"/><circle cx="13" cy="15" r="3.2" fill="#1e3a58"/></svg>
<svg style="left:209px;top:1050px" width="22" height="19"><path d="M0 1.5C0 0.7 0.7 0 1.5 0H7.5L9.5 2H20.5C21.3 2 22 2.7 22 3.5V17.5C22 18.3 21.3 19 20.5 19H1.5C0.7 19 0 18.3 0 17.5Z" fill="#f3c34a"/><path d="M0 4H22V17.5C22 18.3 21.3 19 20.5 19H1.5C0.7 19 0 18.3 0 17.5Z" fill="#fcd87a"/><path d="M6 11H16V17H13V14H9V17H6Z" fill="#3a8ad8"/></svg>
<div class="a" style="left:200px;top:1078px;width:40px;height:2px;background:#8ab9e6"></div>
<div class="a" style="left:257.5px;top:1048.5px;width:23px;height:23px;border-radius:50%;background:#f2f2f2"></div>
<svg style="left:262px;top:1053px" width="14" height="14"><path d="M1.5 0.5L7 7V13.5M12.5 0.5L7 7" stroke="#e3262c" stroke-width="2.6" fill="none"/></svg>
<div class="a" style="left:306px;top:1048.5px;width:24px;height:24px;border-radius:50%;background:#fc3f1d"></div>
<div class="t" style="left:311px;top:1052px;font-size:17px;color:#fff;font-weight:bold">Я</div>
<div class="a" style="left:356px;top:1049px;width:22px;height:22px;background:#1a7ca6"></div>
<svg style="left:358px;top:1051px" width="18" height="18"><path d="M2 2V15H14" stroke="#fff" stroke-width="1.3" fill="none"/><path d="M2 2H9L16 8" stroke="#cde" stroke-width="1" fill="none"/><circle cx="12" cy="10" r="2" fill="#fff"/><path d="M8.5 15C8.5 12.5 10 12 12 12C14 12 15.5 12.5 15.5 15Z" fill="#fff"/></svg>
<div class="a" style="left:347px;top:1078px;width:40px;height:2px;background:#8ab9e6"></div>
<div class="a" style="left:392px;top:1040px;width:48px;height:40px;background:#b06b33"></div>
<div class="a" style="left:392px;top:1078px;width:48px;height:2px;background:#f7882a"></div>
<div class="a" style="left:405px;top:1049px;width:22px;height:22px;border-radius:50%;background:#2aa3df"></div>
<svg style="left:409px;top:1055px" width="14" height="11"><path d="M0 5.5L13 0L10.5 10.5L6.5 7.5L4.8 9.8L4.5 6.5Z" fill="#fff"/></svg>
<div class="a" style="left:414px;top:1062px;width:17px;height:11px;background:#e5322d;border-radius:2px"></div>
<div class="t" style="left:415px;top:1063px;font-size:9.5px;color:#fff">..14</div>
<svg style="left:453px;top:1048px" width="23" height="24"><rect x="9" y="3" width="13" height="18" fill="#fff"/><path d="M11 6H20M11 8.5H20M11 11H20M11 13.5H20M11 16H20M11 18.5H20" stroke="#2b579a" stroke-width="1.1"/><path d="M0 3L13 0V24L0 21Z" fill="#2b579a"/><path d="M2.5 8L4 16L5.8 10.5L7.6 16L9.1 8" stroke="#fff" stroke-width="1.3" fill="none"/></svg>
<div class="a" style="left:445px;top:1078px;width:40px;height:2px;background:#8ab9e6"></div>
<div class="a" style="left:490px;top:1040px;width:48px;height:40px;background:#4a5560"></div>
<div class="a" style="left:490px;top:1078px;width:48px;height:2px;background:#8ab9e6"></div>
<svg style="left:502px;top:1048px" width="24" height="24"><circle cx="12" cy="12" r="12" fill="#db4437"/><path d="M12 12L1.6 6A12 12 0 0 0 6 22.4Z" fill="#0f9d58"/><path d="M12 12L6 22.4A12 12 0 0 0 22.4 6Z" fill="#fbc02d"/><path d="M12 6H22.4A12 12 0 0 0 12 0A12 12 0 0 0 1.6 6L7 12A5 5 0 0 1 12 6Z" fill="#db4437"/><circle cx="12" cy="12" r="5.5" fill="#fff"/><circle cx="12" cy="12" r="4.3" fill="#4285f4"/></svg>
<svg style="left:552px;top:1048px" width="23" height="24"><circle cx="11.5" cy="12" r="9" stroke="#e94235" stroke-width="5" fill="none"/><path d="M11.5 3A9 9 0 0 1 20.5 12" stroke="#1a73e8" stroke-width="5" fill="none"/><path d="M20.5 12A9 9 0 0 1 11.5 21" stroke="#34a853" stroke-width="5" fill="none"/><path d="M11.5 21A9 9 0 0 1 4 17" stroke="#fbbc04" stroke-width="5" fill="none"/></svg>
<div class="a" style="left:543px;top:1078px;width:40px;height:2px;background:#8ab9e6"></div>
<svg style="left:1651px;top:1056px" width="13" height="8"><path d="M0.5 7L6.5 1L12.5 7" stroke="#fff" stroke-width="1.3" fill="none"/></svg>
<svg style="left:1673px;top:1051px" width="18" height="17"><path d="M0.7 2.5L15.5 0.7V13.8H0.7Z" stroke="#fff" stroke-width="1.3" fill="none"/><path d="M5 9L7 6.5H10M11 5L9 8H6" stroke="#fff" stroke-width="1.1" fill="none"/><circle cx="13.5" cy="13.5" r="3.2" fill="#f7a12c"/></svg>
<svg style="left:1696px;top:1052px" width="18" height="15"><path d="M0.7 4.5H3.5L8 0.8V14.2L3.5 10.5H0.7Z" stroke="#fff" stroke-width="1.2" fill="none"/><path d="M10.5 5C11.3 6.5 11.3 8.5 10.5 10M13 3C14.5 5.5 14.5 9.5 13 12" stroke="#fff" stroke-width="1.1" fill="none"/><path d="M15.5 1C17.5 4.5 17.5 10.5 15.5 14" stroke="#888" stroke-width="1.1" fill="none"/></svg>
<svg style="left:1720px;top:1053px" width="18" height="12"><path d="M7 3.5H16V10.5H7Z" stroke="#fff" stroke-width="1.3" fill="none"/><rect x="8" y="4.5" width="6" height="5" fill="#fff"/><path d="M16.5 5.5V8.5" stroke="#fff" stroke-width="1.5"/><path d="M1 3V1M4 3V1M0 3H5V6C5 7 4 8 2.5 8C1 8 0 7 0 6Z M2.5 8V11H7" stroke="#fff" stroke-width="1.1" fill="none"/></svg>
<svg style="left:1748px;top:1054px" width="13" height="12"><path d="M1 11A10 10 0 0 1 11.5 1M3.8 11A7.2 7.2 0 0 1 11.5 3.8M6.6 11A4.4 4.4 0 0 1 11.5 6.6" stroke="#fff" stroke-width="1.2" fill="none"/><circle cx="10.5" cy="10.5" r="1.4" fill="#fff"/></svg>
<div class="t" style="left:1772.0px;top:1053.33px;font-size:12.60px;color:#fff;letter-spacing:-1.073px">РУС</div>
<div class="t" style="left:1821.0px;top:1043.99px;font-size:12.30px;color:#fff;letter-spacing:-0.859px">10:07</div>
<div class="t" style="left:1808.0px;top:1061.89px;font-size:12.30px;color:#fff;letter-spacing:-0.909px">14.06.2023</div>
<svg style="left:1879px;top:1052px" width="17" height="17"><path d="M0.5 0.5H16.5V12.5H9L5 16V12.5H0.5Z" fill="#fff"/><path d="M3 3.5H14M3 6H14M3 8.5H10" stroke="#1c2a44" stroke-width="1.1"/><circle cx="13.5" cy="13" r="3" fill="#1c2a44" stroke="#fff" stroke-width="1"/></svg>
<div class="a" style="left:1915px;top:1040px;width:1px;height:40px;background:#4a5670"></div>
</body></html>
